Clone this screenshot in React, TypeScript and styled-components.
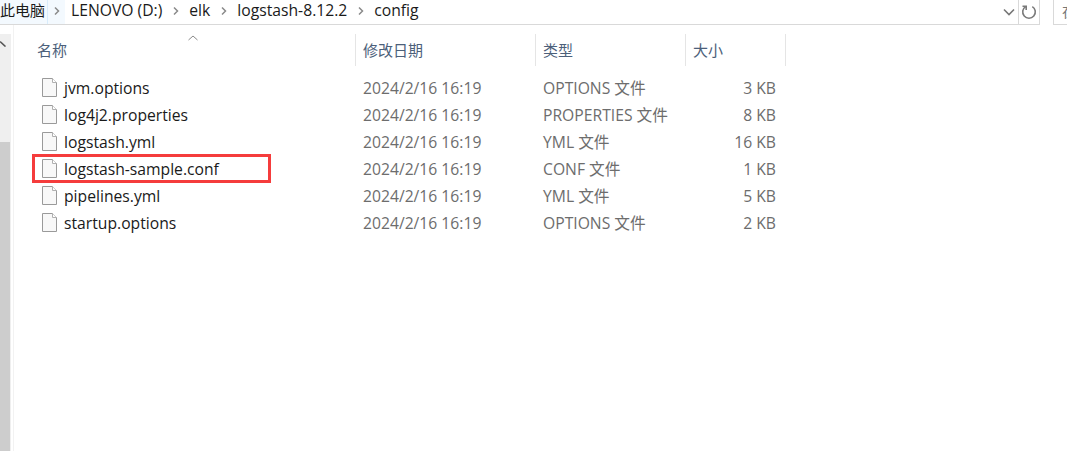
import styled, { createGlobalStyle } from "styled-components";

const GlobalStyle = createGlobalStyle`
  html, body {
    margin: 0;
    padding: 0;
    background: #fff;
  }
  body {
    font-family: "Noto Sans CJK SC", "Noto Sans", sans-serif;
  }
`;

const Window = styled.div`
  width: 1067px;
  height: 451px;
  overflow: hidden;
  display: flex;
  flex-direction: column;
  background: #fff;
`;

const TopBar = styled.div`
  height: 25px;
  flex: none;
  display: flex;
`;

const AddressBar = styled.div`
  flex: 1;
  display: flex;
  align-items: center;
  border-bottom: 1px solid #d9d9d9;
  border-right: 1px solid #d9d9d9;
  min-width: 0;
`;

const RootCrumb = styled.div`
  width: 48px;
  height: 24px;
  flex: none;
  display: flex;
  align-items: center;
  box-sizing: border-box;
  padding-bottom: 5px;
  background: #f3f9fe;
  border-right: 1px solid #d8ecfb;
  font-size: 15px;
  color: #1a1a1a;
  overflow: hidden;
  white-space: nowrap;
`;

const RootArrow = styled.div`
  width: 17px;
  height: 24px;
  flex: none;
  display: flex;
  align-items: center;
  justify-content: center;
  padding-bottom: 2px;
  box-sizing: border-box;
  background: #f3f9fe;
`;

const Crumb = styled.span`
  font-family: "Open Sans", "Noto Sans", sans-serif;
  font-size: 15.7px;
  line-height: 20px;
  margin-bottom: 4px;
  color: #1a1a1a;
  white-space: nowrap;
`;

const Separator = styled.span<{ $w: number }>`
  width: ${({ $w }) => $w}px;
  flex: none;
  display: flex;
  justify-content: center;
  margin-bottom: 2px;
`;

const Spring = styled.div`
  flex: 1;
`;

const DropButton = styled.div`
  width: 18px;
  height: 24px;
  flex: none;
  display: flex;
  align-items: center;
  justify-content: center;
`;

const RefreshButton = styled.div`
  width: 20px;
  height: 24px;
  flex: none;
  display: flex;
  align-items: center;
  justify-content: center;
  border-left: 1px solid #d9d9d9;
`;

const SearchBox = styled.div`
  width: 14px;
  height: 25px;
  margin-left: 13px;
  flex: none;
  box-sizing: border-box;
  border-left: 1px solid #d9d9d9;
  border-bottom: 1px solid #d9d9d9;
  padding-left: 8px;
  font-size: 15px;
  line-height: 22px;
  color: #777;
  overflow: hidden;
  white-space: nowrap;
`;

const Body = styled.div`
  flex: 1;
  display: flex;
  min-height: 0;
`;

const Rail = styled.div`
  width: 11px;
  flex: none;
  margin-top: 9px;
  display: flex;
  flex-direction: column;
  background: #efefef;
`;

const RailArrow = styled.svg`
  flex: none;
  display: block;
  margin-top: 7px;
  margin-bottom: 95px;
`;

const RailThumb = styled.div`
  flex: 1;
  width: 10px;
  background: #cdcdcd;
`;

const RailEdge = styled.div`
  width: 1px;
  flex: none;
  margin-left: 2px;
  background: #f2f2f2;
`;

const Content = styled.div`
  flex: 1;
  padding-left: 18px;
  min-width: 0;
`;

const Grid = styled.div`
  display: grid;
  grid-template-columns: 324px 180px 150px 100px;
  width: 754px;
`;

const HeaderCell = styled.div<{ $first?: boolean }>`
  position: relative;
  height: 32px;
  margin-top: 9px;
  margin-bottom: 8px;
  padding-left: ${({ $first }) => ($first ? 5 : 7)}px;
  padding-bottom: 2px;
  display: flex;
  align-items: center;
  font-size: 15px;
  color: #4c607a;
  border-right: 1px solid #e5e5e5;
  box-sizing: border-box;
`;

const SortArrow = styled.svg`
  position: absolute;
  left: 156px;
  top: 1px;
`;

const Row = styled.div`
  display: contents;
`;

const Cell = styled.div<{ $right?: boolean }>`
  height: 27px;
  display: flex;
  align-items: center;
  justify-content: ${({ $right }) => ($right ? "flex-end" : "flex-start")};
  padding-left: ${({ $right }) => ($right ? 0 : 7)}px;
  padding-right: ${({ $right }) => ($right ? 10 : 0)}px;
  font-family: "Open Sans", "Noto Sans CJK SC", sans-serif;
  font-size: 15.7px;
  color: #6d6d6d;
  white-space: nowrap;
  box-sizing: border-box;
`;

const NameCell = styled.div`
  position: relative;
  height: 27px;
  display: flex;
  align-items: center;
  gap: 7px;
  padding-left: 10px;
  font-family: "Open Sans", "Noto Sans", sans-serif;
  font-size: 15.7px;
  color: #1a1a1a;
  white-space: nowrap;
`;

const Highlight = styled.div`
  position: absolute;
  left: 0;
  top: -1px;
  width: 239px;
  height: 29px;
  border: 3px solid #f53c3c;
  box-sizing: border-box;
`;

const Chevron = () => (
  <svg width="8" height="10" viewBox="0 0 8 10">
    <path d="M2 1.5 5.5 5 2 8.5" fill="none" stroke="#8a8a8a" strokeWidth="1.5" />
  </svg>
);

const FileIcon = () => (
  <svg width="15" height="19" viewBox="0 0 15 19">
    <path d="M.5.5h10l4 4v14H.5z" fill="#f8f8f8" stroke="#9a9a9a" />
    <path d="M10.5.5v4h4" fill="#fff" stroke="#b0b0b0" />
  </svg>
);

const files = [
  { name: "jvm.options", type: "OPTIONS 文件", size: "3 KB" },
  { name: "log4j2.properties", type: "PROPERTIES 文件", size: "8 KB" },
  { name: "logstash.yml", type: "YML 文件", size: "16 KB" },
  { name: "logstash-sample.conf", type: "CONF 文件", size: "1 KB", marked: true },
  { name: "pipelines.yml", type: "YML 文件", size: "5 KB" },
  { name: "startup.options", type: "OPTIONS 文件", size: "2 KB" },
];

export default function App() {
  return (
    <>
      <GlobalStyle />
      <Window>
        <TopBar>
          <AddressBar>
            <RootCrumb>此电脑</RootCrumb>
            <RootArrow>
              <Chevron />
            </RootArrow>
            <Separator $w={6} />
            <Crumb>LENOVO (D:)</Crumb>
            <Separator $w={27}>
              <Chevron />
            </Separator>
            <Crumb>elk</Crumb>
            <Separator $w={27}>
              <Chevron />
            </Separator>
            <Crumb>logstash-8.12.2</Crumb>
            <Separator $w={27}>
              <Chevron />
            </Separator>
            <Crumb>config</Crumb>
            <Spring />
            <DropButton>
              <svg width="12" height="8" viewBox="0 0 12 8">
                <path d="M1 1.5 6 6.5 11 1.5" fill="none" stroke="#777" strokeWidth="1.6" />
              </svg>
            </DropButton>
            <RefreshButton>
              <svg width="16" height="16" viewBox="0 0 16 16">
                <path d="M11.3 2.6a6.3 6.3 0 1 1-6.6 0" fill="none" stroke="#7a7a7a" strokeWidth="1.6" />
                <path d="M1.5 2.2h3.7v3.7" fill="none" stroke="#7a7a7a" strokeWidth="1.6" />
              </svg>
            </RefreshButton>
          </AddressBar>
          <SearchBox>在</SearchBox>
        </TopBar>
        <Body>
          <Rail>
            <RailArrow width="8" height="6" viewBox="0 0 8 6">
              <path d="M0 .5 5.5 5.5" fill="none" stroke="#555" strokeWidth="1.6" />
            </RailArrow>
            <RailThumb />
          </Rail>
          <RailEdge />
          <Content>
            <Grid>
              <HeaderCell $first>
                名称
                <SortArrow width="10" height="6" viewBox="0 0 10 6">
                  <path d="M.5 5 5 1 9.5 5" fill="none" stroke="#8a8a8a" />
                </SortArrow>
              </HeaderCell>
              <HeaderCell>修改日期</HeaderCell>
              <HeaderCell>类型</HeaderCell>
              <HeaderCell>大小</HeaderCell>
              {files.map((f) => (
                <Row key={f.name}>
                  <NameCell>
                    {f.marked && <Highlight />}
                    <FileIcon />
                    {f.name}
                  </NameCell>
                  <Cell>2024/2/16 16:19</Cell>
                  <Cell>{f.type}</Cell>
                  <Cell $right>{f.size}</Cell>
                </Row>
              ))}
            </Grid>
          </Content>
        </Body>
      </Window>
    </>
  );
}
